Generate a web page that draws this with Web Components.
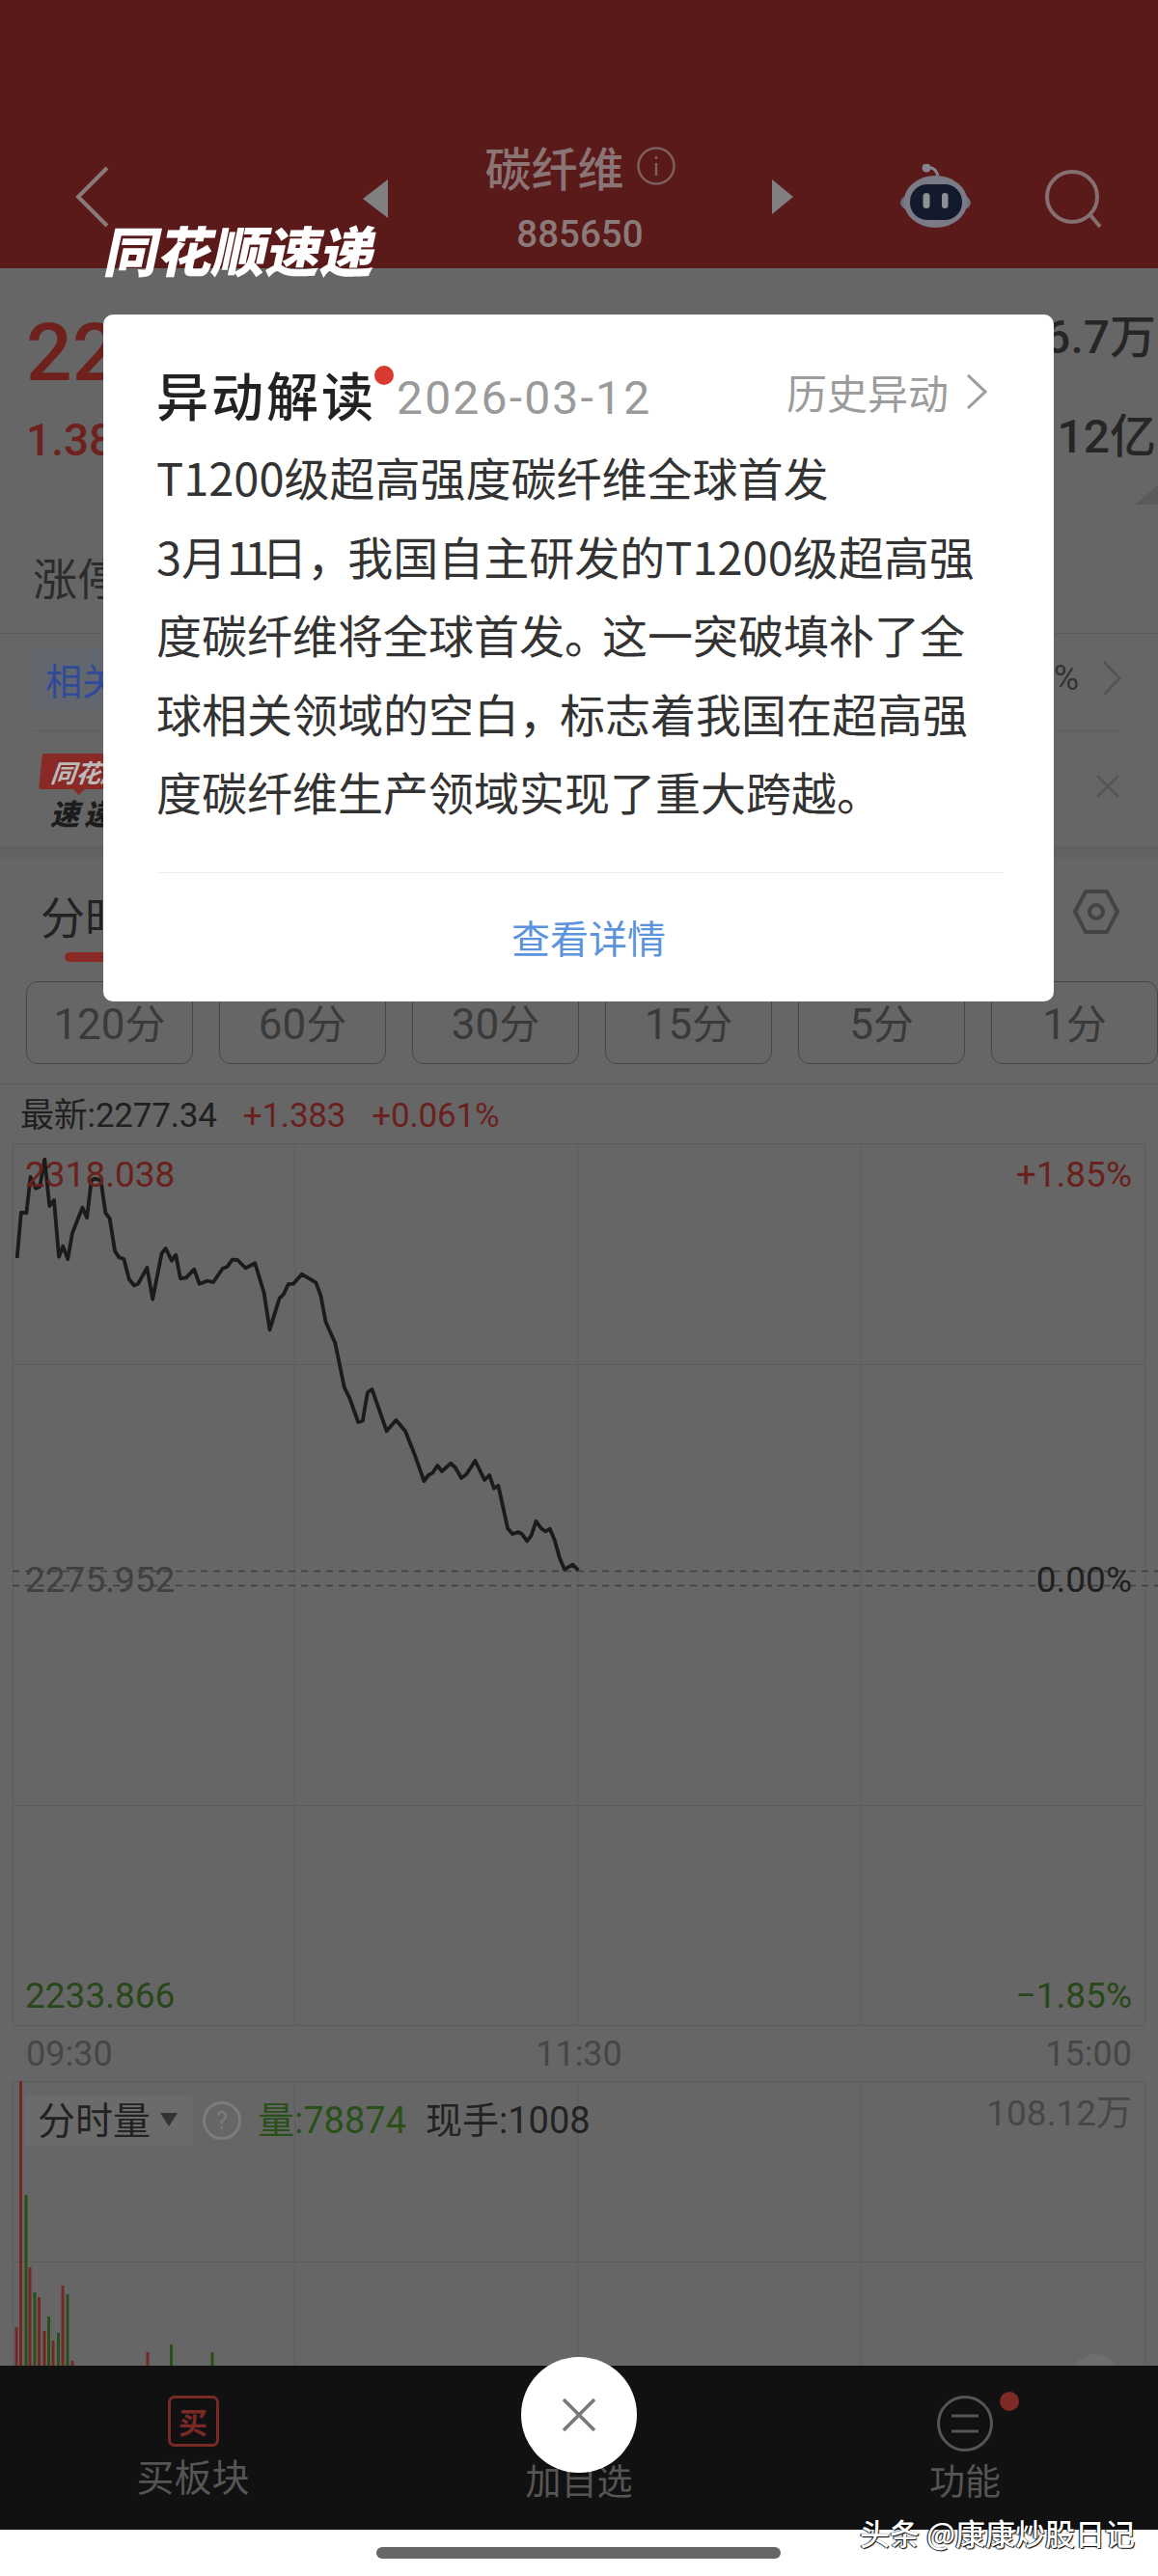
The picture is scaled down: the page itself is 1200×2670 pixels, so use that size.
<!DOCTYPE html>
<html lang="zh-CN">
<head>
<meta charset="utf-8">
<title>碳纤维</title>
<style>
  html, body { margin: 0; padding: 0; background: #fff; }
  body { width: 1200px; height: 2670px; overflow: hidden; position: relative;
    font-family: "Noto Sans CJK SC", "Noto Sans", sans-serif; }
  #dim { background: #666; height: 2622px; }
  /* the reference font sets these narrower than Noto does */
  .narrow1 { letter-spacing: -8px; }
  .comma { letter-spacing: -5px; }
  .stop { letter-spacing: -8px; }
</style>
</head>
<body>
<div id="dim">
  <stock-header name="碳纤维" code="885650"></stock-header>
  <quote-panel></quote-panel>
  <period-bar></period-bar>
  <price-chart></price-chart>
  <volume-chart></volume-chart>
  <action-bar></action-bar>
</div>
<home-indicator></home-indicator>
<alert-modal date="2026-03-12">
  T1200级超高强度碳纤维全球首发<br>
  3月<span class="narrow1">11</span>日<span class="comma">，</span>我国自主研发的T1200级超高强<br>
  度碳纤维将全球首发<span class="stop">。</span>这一突破填补了全<br>
  球相关领域的空白<span class="comma">，</span>标志着我国在超高强<br>
  度碳纤维生产领域实现了重大跨越。
</alert-modal>
<video-marks></video-marks>

<script>
const CJK = `"Noto Sans CJK SC", "Noto Sans", sans-serif`;
const NUM = `Roboto, "Noto Sans CJK SC", sans-serif`;

class StockHeader extends HTMLElement {
    constructor() {
        super();
        this.attachShadow({ mode: 'open' });
        const name = this.getAttribute('name') || '';
        const code = this.getAttribute('code') || '';
        this.shadowRoot.innerHTML = `
            <style>
                :host { display: grid; grid-template-columns: 376px 446px 1fr; height: 278px;
                    background: #5a1a1a; box-sizing: border-box; color: #8a7474; font-family: ${CJK}; }
                .back { padding: 172px 0 0 78px; }
                .mid { display: flex; justify-content: space-between; align-items: flex-start; padding-top: 146px; }
                .tri { margin-top: 40px; }
                .col { display: flex; flex-direction: column; align-items: center; }
                .name { display: flex; align-items: center; gap: 13px; font-size: 48px; font-weight: 500; line-height: 52px; height: 52px; }
                .code { font: 500 38.500px/44px ${NUM}; margin-top: 23px; color: #8a7a7a; }
                .right { display: flex; gap: 76px; padding: 170px 0 0 111px; align-items: flex-start; }
                svg { display: block; }
            </style>
            <div class="back">
                <svg width="36" height="64" viewBox="0 0 36 64"><path d="M33 2 3 32l30 30" fill="none" stroke="#8a7a7a" stroke-width="4"/></svg>
            </div>
            <div class="mid">
                <svg class="tri" width="26" height="40" viewBox="0 0 26 40"><path d="M26 0v40L0 20z" fill="#808080"/></svg>
                <div class="col">
                    <div class="name">${name}
                        <svg width="40" height="40" viewBox="0 0 40 40"><circle cx="20" cy="20" r="18.500" fill="none" stroke="#7d5f5f" stroke-width="2.500"/><path d="M20 17v13M20 10v3" stroke="#7d5f5f" stroke-width="2.500"/></svg>
                    </div>
                    <div class="code">${code}</div>
                </div>
                <svg class="tri" width="22" height="36" viewBox="0 0 22 36"><path d="M0 0v36l22-18z" fill="#808080"/></svg>
            </div>
            <div class="right">
                <svg width="74" height="68" viewBox="0 0 74 68">
                    <path d="M28 4c5-1 9 2 11 8" fill="none" stroke="#85858f" stroke-width="3"/>
                    <circle cx="27" cy="4" r="4.500" fill="#85858f"/>
                    <ellipse cx="36.500" cy="40" rx="36.500" ry="14" fill="#6f6f7c"/>
                    <ellipse cx="36.500" cy="39" rx="33" ry="27" fill="#7b7b88"/>
                    <rect x="10" y="21" width="54" height="37" rx="18" fill="#141a2e"/>
                    <rect x="23.500" y="30" width="7" height="16" rx="3.500" fill="#8f8f96"/>
                    <rect x="43" y="30" width="6.500" height="16" rx="3.200" fill="#8f8f96"/>
                </svg>
                <svg style="margin-top:6px" width="60" height="62" viewBox="0 0 60 62"><circle cx="28" cy="28" r="26" fill="none" stroke="#847070" stroke-width="4"/><path d="M47 47l10 12" stroke="#847070" stroke-width="4"/></svg>
            </div>
        `;
    }
}
customElements.define('stock-header', StockHeader);

class QuotePanel extends HTMLElement {
    constructor() {
        super();
        this.attachShadow({ mode: 'open' });
        this.shadowRoot.innerHTML = `
            <style>
                :host { display: block; font-family: ${NUM}; color: #262626; }
                .stats { height: 379px; box-sizing: border-box; border-bottom: 1px solid #5c5c5c; padding: 0 2px 0 27px; position: relative; }
                .line { display: flex; justify-content: space-between; align-items: flex-end; }
                .big { font-size: 84px; line-height: 98px; font-weight: 500; color: #6e211d; }
                .l1 { padding-top: 39px; height: 98px; }
                .l1 .r { font-size: 48px; font-weight: 500; line-height: 60px; margin-bottom: 35px; }
                .l2 { margin-top: 10px; height: 62px; }
                .l2 .red { font-size: 46px; font-weight: 500; color: #6e211d; line-height: 62px; }
                .l2 .r { font-size: 48px; font-weight: 500; line-height: 62px; position: relative; top: -3px; }
                .corner { position: absolute; right: 0; top: 225px; width: 0; height: 0; border-left: 24px solid transparent; border-bottom: 20px solid #5a5a5a; }
                .limit { font: 46px/60px ${CJK}; margin: 80px 0 0 7px; color: #2c2c2c; }
                .chip-row { height: 101px; box-sizing: border-box; margin: 0 40px 0 33px; border-bottom: 1px solid #5e5e5e; display: flex; justify-content: space-between; align-items: center; padding-bottom: 8px; }
                .chip { font: 38px/63px ${CJK}; color: #2f4a9a; background: #62666f; border-radius: 8px; padding-left: 14px; width: 240px; box-sizing: border-box; }
                .chip-r { display: flex; align-items: center; gap: 24px; font-size: 36px; color: #333; margin-right: -2px; }
                .news { height: 119px; box-sizing: border-box; display: flex; justify-content: space-between; padding: 23px 40px 0 42px; position: relative; }
                .badge { background: #8a2a26; color: #bbb; font: italic 700 26px/37px ${CJK}; height: 37px; width: 120px; padding-left: 11px; box-sizing: border-box; border-radius: 3px; position: relative; transform: skewX(-6deg); }
                .badge::after { content: ''; position: absolute; left: 36px; top: 37px; border: 6px solid transparent; border-top-color: #8a2a26; }
                .sub { font: italic 900 30px/34px ${CJK}; color: #1c1c1c; margin: 7px 0 0 10px; letter-spacing: 5px; }
                .band { height: 13px; background: linear-gradient(#5f5f5f, #636363); }
                .tabs { height: 127px; display: flex; justify-content: space-between; padding: 28px 40px 0 42px; box-sizing: border-box; position: relative; font: 46px/60px ${CJK}; color: #222; }
                .bar { position: absolute; left: 67px; top: 97px; width: 90px; height: 10px; border-radius: 5px; background: #8a2826; }
                svg { display: block; }
            </style>
            <div class="stats">
                <div class="line l1"><span class="big">22</span><span class="r">6.7万</span></div>
                <div class="line l2"><span class="red">1.38</span><span class="r">.12亿</span></div>
                <div class="corner"></div>
                <div class="limit">涨停</div>
            </div>
            <div class="chip-row">
                <div class="chip">相关</div>
                <div class="chip-r">%
                    <svg width="20" height="36" viewBox="0 0 20 36"><path d="M2 1l16 17L2 35" fill="none" stroke="#555" stroke-width="3"/></svg>
                </div>
            </div>
            <div class="news">
                <div>
                    <div class="badge">同花顺</div>
                    <div class="sub">速递</div>
                </div>
                <svg style="margin-top:22px" width="24" height="24" viewBox="0 0 24 24"><path d="M1 1l22 22M23 1 1 23" stroke="#555" stroke-width="2.500"/></svg>
            </div>
            <div class="band"></div>
            <div class="tabs">
                <span>分时</span>
                <svg style="margin-top:4px" width="48" height="46" viewBox="0 0 48 46"><path d="M13 2h22l11 21-11 21H13L2 23z" fill="none" stroke="#444" stroke-width="4"/><circle cx="24" cy="23" r="7" fill="none" stroke="#444" stroke-width="4"/></svg>
                <div class="bar"></div>
            </div>
        `;
    }
}
customElements.define('quote-panel', QuotePanel);

class PeriodBar extends HTMLElement {
    constructor() {
        super();
        this.attachShadow({ mode: 'open' });
        const items = ['120分', '60分', '30分', '15分', '5分', '1分'];
        this.shadowRoot.innerHTML = `
            <style>
                :host { display: flex; gap: 27px; padding-left: 27px; height: 107px; box-sizing: border-box;
                    border-bottom: 1px solid #5c5c5c; width: 1200px; font: 44px/81px ${NUM}; color: #3a3a3a; }
                div { width: 173px; height: 86px; box-sizing: border-box; border: 1px solid #474747; border-radius: 12px; text-align: center; flex: none; }
                span { font-family: ${CJK}; font-size: 42px; }
            </style>
            ${items.map(t => `<div>${t.replace('分', '')}<span>分</span></div>`).join('')}
        `;
    }
}
customElements.define('period-bar', PeriodBar);

class PriceChart extends HTMLElement {
    constructor() {
        super();
        this.attachShadow({ mode: 'open' });
        // read off the reference, in zoomed crop coordinates
        const raw = [[42,372],[52,230],[65,232],[75,120],[88,155],[98,150],[110,65],[122,210],[133,192],[145,368],[155,335],[167,375],[178,295],[203,215],[214,247],[225,130],[233,125],[248,130],[260,232],[270,248],[283,350],[293,370],[305,375],[318,438],[330,457],[340,452],[362,402],[376,500],[398,358],[408,342],[423,380],[433,362],[444,435],[458,433],[478,407],[491,452],[510,443],[525,447],[548,405],[560,398],[572,377],[585,378],[605,403],[628,388],[650,480],[664,595],[688,497],[698,485],[710,453],[722,452],[743,422],[778,448],[790,490],[802,570],[825,635],[848,775],[860,805],[882,882],[893,878],[905,790],[916,780],[952,910],[975,876],[998,910],[1020,980],[1044,1065],[1055,1047],[1065,1040],[1077,1017],[1088,1035],[1110,1010],[1122,1025],[1136,1056],[1148,1045],[1170,1002],[1193,1062],[1205,1047],[1216,1088],[1227,1080],[1250,1212],[1262,1230],[1276,1224],[1285,1230],[1298,1252],[1308,1235],[1320,1190],[1332,1212],[1343,1222],[1354,1214],[1366,1250],[1378,1305],[1390,1340],[1410,1325],[1424,1343]];
        const pts = raw.map(p => `${(p[0] / 2.376).toFixed(1)},${(p[1] / 3 - 5).toFixed(1)}`).join(' ');
        const grid = '#5c5c5c';
        this.shadowRoot.innerHTML = `
            <style>
                :host { display: block; font: 400 37px/44px ${NUM}; }
                .info { height: 61px; display: flex; padding-left: 21px; font-size: 35px; line-height: 66px; color: #202020; letter-spacing: -.2px; }
                .info b { font-weight: 400; color: #6a211d; margin-left: 27px; }
                .plot { position: relative; height: 915px; }
                svg { position: absolute; left: 0; top: 0; }
                .t { position: absolute; }
                .lft { left: 26px; } .rgt { right: 27px; }
                .red { color: #6a211d; } .grn { color: #28481a; } .gry { color: #404040; } .blk { color: #202020; }
                .axis { height: 57px; display: flex; justify-content: space-between; padding: 7px 27px 0; font-size: 36px; line-height: 44px; color: #464646; box-sizing: border-box; }
            </style>
            <div class="info"><span>最新:2277.34</span><b>+1.383</b><b>+0.061%</b></div>
            <div class="plot">
                <svg width="1200" height="915" viewBox="0 0 1200 915">
                    <rect x="13.500" y=".5" width="1173" height="914" fill="none" stroke="${grid}"/>
                    <path d="M305.500 0v915M598.500 0v915M892.500 0v915M13 229.500h1174M13 686.500h1174" stroke="${grid}" fill="none"/>
                    <path d="M13 443.500h1187M13 458.500h1187" stroke="#3e3e3e" stroke-width="1.500" stroke-dasharray="7 6" fill="none"/>
                    <polyline points="${pts}" fill="none" stroke="#1b1b1b" stroke-width="3.800" stroke-linejoin="round"/>
                </svg>
                <span class="t lft red" style="top:11px">2318.038</span>
                <span class="t rgt red" style="top:11px">+1.85%</span>
                <span class="t lft gry" style="top:431px">2275.952</span>
                <span class="t rgt blk" style="top:431px">0.00%</span>
                <span class="t lft grn" style="top:862px">2233.866</span>
                <span class="t rgt grn" style="top:862px">−1.85%</span>
            </div>
            <div class="axis"><span>09:30</span><span>11:30</span><span>15:00</span></div>
        `;
    }
}
customElements.define('price-chart', PriceChart);

class VolumeChart extends HTMLElement {
    constructor() {
        super();
        this.attachShadow({ mode: 'open' });
        const R = '#742824', G = '#2a5019';
        const bars = [[17,2412,R],[21.5,2157,R],[27,2275,G],[31,2350,R],[36,2376,G],[40.5,2381,R],[46,2416,R],[50.5,2401,G],[55,2426,R],[60.5,2418,G],[65,2369,R],[70,2378,G],[75,2447,R],[153,2438,R],[177.5,2430,G],[220,2438,G]];
        const rects = bars.map(b => `<rect x="${b[0] - 1.5}" y="${b[1] - 2157}" width="3" height="${2452 - b[1]}" fill="${b[2]}"/>`).join('');
        this.shadowRoot.innerHTML = `
            <style>
                :host { display: block; position: relative; height: 295px; font: 400 38px/44px ${NUM}; overflow: hidden; }
                svg.g { position: absolute; left: 0; top: 0; }
                .row { position: absolute; left: 25px; top: 13px; display: flex; align-items: center; }
                .sel { width: 175px; height: 52px; background: #6b6b6b; border-radius: 4px; display: flex; align-items: center; font: 400 39px/46px ${CJK}; color: #222; padding: 0 0 6px 14px; box-sizing: border-box; gap: 10px; }
                .sel i { border: 9px solid transparent; border-top: 14px solid #333; border-bottom: 0; margin-top: 4px; }
                .q { margin: 0 17px 0 10px; display: block; }
                .grn { color: #2a5019; margin-right: 20px; position: relative; top: -3px; }
                .blk { color: #222; position: relative; top: -3px; }
                .grn em, .blk em { font: 400 38px ${CJK}; }
                .max { position: absolute; right: 27px; top: 12px; color: #474747; font-size: 37px; }
                .blob { position: absolute; left: 1110px; top: 283px; width: 50px; height: 50px; border-radius: 50%; background: #6e6e6e; }
            </style>
            <svg class="g" width="1200" height="295" viewBox="0 0 1200 295">
                <path d="M13 .5h1174M13 187.500h1174M13.500 0v295M305.500 0v295M598.500 0v295M892.500 0v295M1186.500 0v295" stroke="#5c5c5c" fill="none"/>
                ${rects}
            </svg>
            <div class="row">
                <div class="sel">分时量<i></i></div>
                <svg class="q" width="40" height="40" viewBox="0 0 40 40"><circle cx="20" cy="20" r="18.500" fill="none" stroke="#7c7c7c" stroke-width="3"/><text x="20" y="29" text-anchor="middle" font-family="Roboto" font-size="26" fill="#7c7c7c">?</text></svg>
                <span class="grn"><em>量</em>:78874</span>
                <span class="blk"><em>现手</em>:1008</span>
            </div>
            <span class="max">108.12万</span>
            <div class="blob"></div>
        `;
    }
}
customElements.define('volume-chart', VolumeChart);

class ActionBar extends HTMLElement {
    constructor() {
        super();
        this.attachShadow({ mode: 'open' });
        this.shadowRoot.innerHTML = `
            <style>
                :host { display: grid; grid-template-columns: 400px 400px 400px; height: 170px; background: #111; color: #555; font: 37px/48px ${CJK}; text-align: center; }
                .it { display: flex; flex-direction: column; align-items: center; padding-top: 31px; box-sizing: border-box; position: relative; }
                .ic { height: 58px; margin-bottom: 5px; }
                .buy { width: 53px; height: 53px; border: 3px solid #7a2a26; border-radius: 7px; box-sizing: border-box; color: #7a2a26; font: 700 30px/47px ${CJK}; }
                .big { font-size: 39px; margin-top: -5px; }
                .dot { position: absolute; left: 236px; top: 27px; width: 20px; height: 20px; border-radius: 50%; background: #7e2a26; }
            </style>
            <div class="it"><div class="ic"><div class="buy">买</div></div><span class="big">买板块</span></div>
            <div class="it"><div class="ic"></div><span>加自选</span></div>
            <div class="it">
                <svg class="ic" width="58" height="58" viewBox="0 0 58 58"><circle cx="29" cy="29" r="27.500" fill="none" stroke="#555" stroke-width="3"/><path d="M15 21h28M15 37h28" stroke="#555" stroke-width="3"/></svg>
                <span>功能</span><div class="dot"></div>
            </div>
        `;
    }
}
customElements.define('action-bar', ActionBar);

class HomeIndicator extends HTMLElement {
    constructor() {
        super();
        this.attachShadow({ mode: 'open' });
        this.shadowRoot.innerHTML = `
            <style>
                :host { display: block; height: 48px; padding-top: 18px; box-sizing: border-box; }
                div { width: 419px; height: 12px; margin-left: 390px; background: #666; border-radius: 6px; }
            </style>
            <div></div>
        `;
    }
}
customElements.define('home-indicator', HomeIndicator);

class AlertModal extends HTMLElement {
    constructor() {
        super();
        this.attachShadow({ mode: 'open' });
        const date = this.getAttribute('date') || '';
        this.shadowRoot.innerHTML = `
            <style>
                :host { position: absolute; left: 0; top: 0; width: 1200px; height: 2622px; font-family: ${CJK}; }
                .card { position: absolute; left: 107px; top: 326px; width: 985px; height: 712px; background: #fff; border-radius: 10px; box-sizing: border-box; padding: 0 52px 0 55px; }
                .head { display: flex; align-items: center; height: 100px; padding-top: 32px; position: relative; }
                h2 { margin: 2px 0 0; font-size: 54px; font-weight: 500; color: #222; letter-spacing: 3px; line-height: 80px; }
                .dot { position: absolute; left: 226px; top: 53px; width: 20px; height: 20px; border-radius: 50%; background: #d93a30; }
                .date { font: 48px/80px ${NUM}; color: #9a9a9a; margin: 10px 0 0 21px; letter-spacing: 2.200px; }
                .hist { margin-left: auto; display: flex; align-items: center; gap: 18px; font-size: 42px; line-height: 60px; color: #9c9c9c; margin-right: 17px; margin-top: -5px; }
                .body { font-size: 47px; line-height: 81.500px; color: #333; margin-top: -5px; height: 451px; }
                .line { height: 1px; background: #eee; }
                .more { text-align: center; color: #5b93dc; font-size: 40px; line-height: 60px; margin-top: 36px; padding-left: 18px; }
                .close { position: absolute; left: 540px; top: 2443px; width: 120px; height: 120px; border-radius: 50%; background: #fff; display: flex; align-items: center; justify-content: center; }
            </style>
            <div class="card">
                <div class="head">
                    <h2>异动解读</h2><span class="dot"></span><span class="date">${date}</span>
                    <span class="hist">历史异动
                        <svg width="22" height="36" viewBox="0 0 22 36"><path d="M2 1l18 17L2 35" fill="none" stroke="#9c9c9c" stroke-width="3"/></svg>
                    </span>
                </div>
                <div class="body"><slot></slot></div>
                <div class="line"></div>
                <div class="more">查看详情</div>
            </div>
            <div class="close">
                <svg width="36" height="36" viewBox="0 0 36 36"><path d="M2 2l32 32M34 2 2 34" stroke="#777" stroke-width="3.500"/></svg>
            </div>
        `;
    }
}
customElements.define('alert-modal', AlertModal);

class VideoMarks extends HTMLElement {
    constructor() {
        super();
        this.attachShadow({ mode: 'open' });
        this.shadowRoot.innerHTML = `
            <style>
                :host { font-family: ${CJK}; }
                .logo { position: absolute; left: 111px; top: 225px; color: #fff; font-size: 56px; line-height: 66px; font-weight: 900; transform: skewX(-12deg); white-space: nowrap; }
                .mark { position: absolute; left: 891px; top: 2605px; color: #fff; font-size: 31px; line-height: 40px; font-weight: 500; white-space: nowrap; text-shadow: 1px 1px 1px #000, -1px 0 1px #000; }
            </style>
            <div class="logo">同花顺速递</div>
            <div class="mark">头条 @康康炒股日记</div>
        `;
    }
}
customElements.define('video-marks', VideoMarks);
</script>
</body>
</html>
